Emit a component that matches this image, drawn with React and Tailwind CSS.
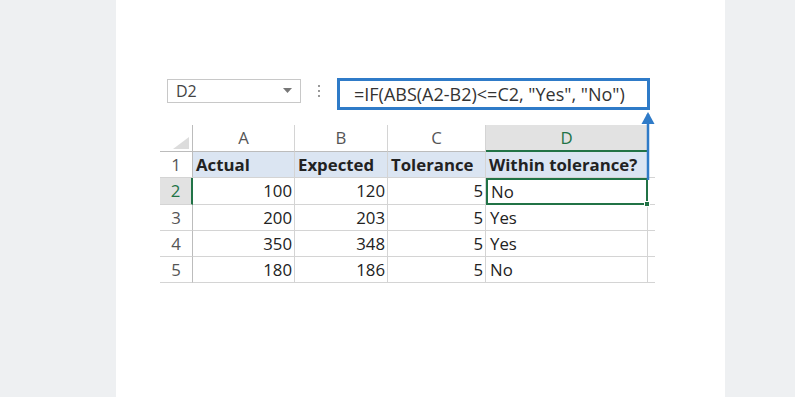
import React from "react";

const cols = ["A", "B", "C", "D"];
const rows = [
  [100, 120, 5, "No"],
  [200, 203, 5, "Yes"],
  [350, 348, 5, "Yes"],
  [180, 186, 5, "No"],
];

export default function App() {
  return (
    <div
      className="w-[795px] h-[397px] bg-[#eef0f2] flex overflow-hidden"
      style={{ fontFamily: "'Open Sans', 'Noto Sans', sans-serif" }}
    >
      <div className="ml-[116px] w-[609px] h-full bg-white relative pt-[78px] pl-[44px]">
        {/* Toolbar */}
        <div className="flex items-start">
          <div className="ml-[7px] mt-[1px] w-[134px] h-[24px] border border-[#c8c8c8] flex items-center justify-between pl-[8px] pr-[8px] text-[16px] text-[#444]">
            <span>D2</span>
            <svg width="9" height="6" viewBox="0 0 9 6">
              <path d="M0 0 L9 0 L4.5 5 Z" fill="#777" />
            </svg>
          </div>
          <div className="ml-[17px] mt-[7px] flex flex-col gap-[3px]">
            <div className="w-[2px] h-[2px] bg-[#999]" />
            <div className="w-[2px] h-[2px] bg-[#999]" />
            <div className="w-[2px] h-[2px] bg-[#999]" />
          </div>
          <div className="ml-[17px] w-[313px] h-[32px] border-[3px] border-[#2f7bc8] flex items-center pl-[14px] text-[18px] text-[#333] whitespace-nowrap">
            =IF(ABS(A2-B2)&lt;=C2, "Yes", "No")
          </div>
        </div>

        {/* Grid */}
        <div className="mt-[15px] grid grid-cols-[33px_102px_93px_98px_162px_7px] text-[16.8px] text-[#222]">
          {/* header row */}
          <div className="h-[27px] border-r border-b border-[#bcbcbc] relative">
            <svg className="absolute right-[3px] bottom-[2px]" width="16" height="12" viewBox="0 0 16 12">
              <path d="M16 0 L16 12 L0 12 Z" fill="#dcdcdc" />
            </svg>
          </div>
          {cols.map((c) => (
            <div
              key={c}
              className={
                c === "D"
                  ? "h-[27px] flex items-center justify-center bg-[#e2e2e2] border-r border-[#d4d4d4] border-b-2 border-b-[#217346] text-[#217346]"
                  : "h-[27px] flex items-center justify-center border-r border-b border-[#d4d4d4] border-b-[#bcbcbc] text-[#555]"
              }
            >
              {c}
            </div>
          ))}
          <div className="h-[27px]" />

          {/* row 1 */}
          <div className="h-[26px] flex items-center justify-center border-r border-b border-[#d4d4d4] border-r-[#bcbcbc] text-[#555]">
            1
          </div>
          {["Actual", "Expected", "Tolerance", "Within tolerance?"].map((t) => (
            <div
              key={t}
              className="h-[26px] flex items-center pl-[3px] bg-[#dbe5f2] border-r border-b border-[#d4d4d4] font-bold whitespace-nowrap"
            >
              {t}
            </div>
          ))}
          <div className="h-[26px] border-b border-[#d4d4d4]" />

          {rows.map((r, i) => {
            const sel = i === 0;
            return (
              <React.Fragment key={i}>
                <div
                  className={
                    sel
                      ? "h-[27px] flex items-center justify-center bg-[#e2e2e2] border-b border-[#d4d4d4] border-r-2 border-r-[#217346] text-[#217346]"
                      : "h-[26px] flex items-center justify-center border-r border-b border-[#d4d4d4] border-r-[#bcbcbc] text-[#555]"
                  }
                >
                  {i + 2}
                </div>
                {r.slice(0, 3).map((v, j) => (
                  <div
                    key={j}
                    className={
                      sel
                        ? "h-[27px] flex items-center justify-end pr-[2px] border-r border-b border-[#d4d4d4]"
                        : "h-[26px] flex items-center justify-end pr-[2px] border-r border-b border-[#d4d4d4]"
                    }
                  >
                    {v}
                  </div>
                ))}
                <div
                  className={
                    sel
                      ? "h-[27px] flex items-center pl-[3px] border-2 border-[#217346] relative"
                      : "h-[26px] flex items-center pl-[4px] border-r border-b border-[#d4d4d4]"
                  }
                >
                  {r[3]}
                  {sel && (
                    <div className="absolute right-[-4px] bottom-[-4px] w-[6px] h-[6px] bg-[#217346] border border-white" />
                  )}
                </div>
                <div className={sel ? "h-[27px] border-b border-[#d4d4d4]" : "h-[26px] border-b border-[#d4d4d4]"} />
              </React.Fragment>
            );
          })}
        </div>

        {/* Arrow */}
        <svg
          className="absolute left-[524px] top-[110px]"
          width="16"
          height="70"
          viewBox="0 0 16 70"
        >
          <path d="M8 4 L8 70" stroke="#2f7bc8" strokeWidth="2.5" />
          <path d="M1.5 14 L8 2 L14.5 14 Z" fill="#2f7bc8" />
        </svg>
      </div>
    </div>
  );
}
